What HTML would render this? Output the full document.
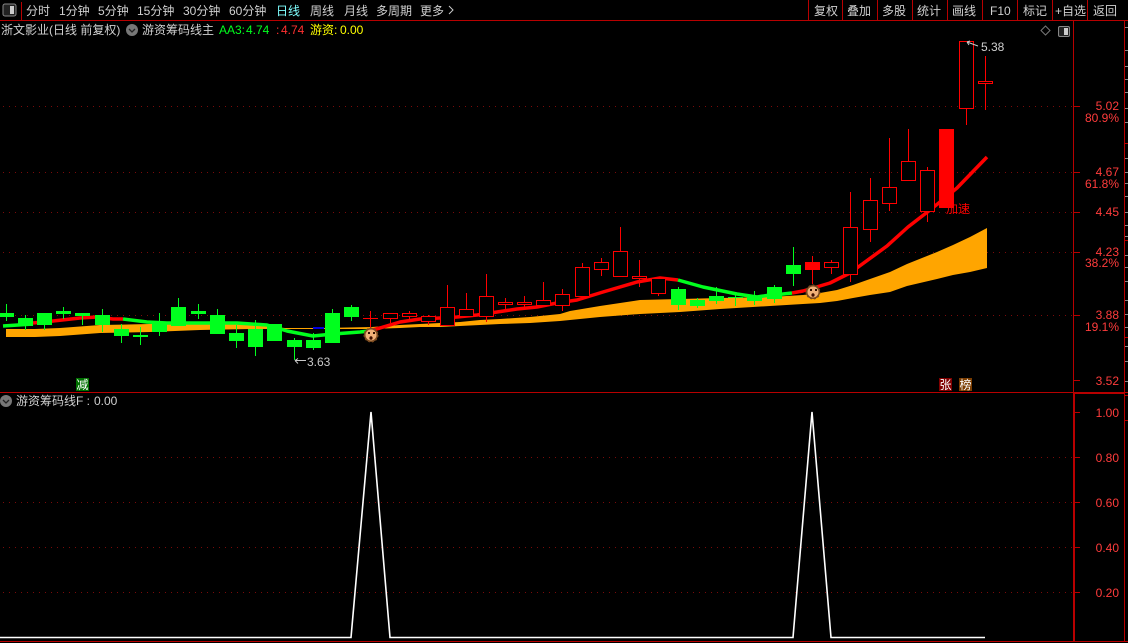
<!DOCTYPE html>
<html><head><meta charset="utf-8"><style>
html,body{margin:0;padding:0;background:#000;width:1128px;height:643px;overflow:hidden}
svg{display:block;font-family:"Liberation Sans","WenQuanYi Zen Hei","Noto Sans CJK SC",sans-serif;font-size:12px}
.c{shape-rendering:crispEdges}
.ax{fill:#ff3c3c;text-anchor:end}
.t{fill:#d0d0d0}
</style></head><body>
<svg width="1128" height="643" viewBox="0 0 1128 643" xmlns="http://www.w3.org/2000/svg">
<rect width="1128" height="643" fill="#000"/>
<!-- grid -->
<g stroke="#7a0a0a" stroke-dasharray="1 5" class="c">
<path d="M3 106.5H1073M3 172.5H1073M3 212.5H1073M3 252.5H1073M3 315.5H1073M3 457.5H1073M3 502.5H1073M3 547.5H1073M3 592.5H1073" fill="none"/>
</g>
<!-- frame -->
<g class="c" fill="none" stroke="#b80000">
<path d="M0 20.5H1128M0 392.5H1128M0 641.5H1128M1073.5 20V641M21.5 2V20M1124.5 20V641"/>
<path d="M808.5 0V20M842.5 0V20M877.5 0V20M912.5 0V20M947.5 0V20M982.5 0V20M1017.5 0V20M1052.5 0V20M1087.5 0V20"/>
<path d="M1074.5 393V641M1074 393.5H1124" stroke-width="1"/>
<path d="M1073 106.5H1080M1073 172.5H1080M1073 212.5H1080M1073 252.5H1080M1073 315.5H1080M1073 380.5H1080M1075 412.5H1080M1075 457.5H1080M1075 502.5H1080M1075 547.5H1080M1075 592.5H1080"/>
<path d="M1124 143.5H1128M1124 240.5H1128M1124 337.5H1128M1124 395.5H1128M1124 420.5H1128"/>
</g>
<path class="c" fill="none" stroke="#8a8a8a" d="M1125 27.5H1128M1125 50.5H1128M1125 66.5H1128M1125 79.5H1128M1125 92.5H1128M1125 108.5H1128M1125 122.5H1128M1125 158.5H1128M1125 172.5H1128M1125 183.5H1128M1125 196.5H1128M1125 212.5H1128M1125 225.5H1128M1125 236.5H1128M1125 255.5H1128M1125 267.5H1128M1125 281.5H1128M1125 300.5H1128M1125 314.5H1128M1125 327.5H1128M1125 346.5H1128M1125 361.5H1128M1125 381.5H1128"/>
<!-- orange band -->
<polygon fill="#ffa500" points="6,329 35,329 60,328 100,325 150,324 200,323 250,325 285,328 313,328 323,328 372,327 400,325 420,324 440,323 460,322 480,320 500,319 530,317 560,314 570,311 600,306 640,300 680,299 720,298 770,297 803,295 820,293 837,290 853,285 870,279 890,272 907,264 937,252 953,245 970,237 987,228 987,268 970,272 953,275 937,279 907,286 890,292 870,295 853,298 837,301 820,303 803,304 770,306 720,309 680,312 640,314 600,317 570,320 560,321 530,323 500,324 480,325 460,326 440,327 420,327 400,328 372,329 323,329 313,329 285,329 250,329 200,330 150,332 100,333 60,336 35,337 6,337"/>
<rect x="313" y="327" width="11" height="2" fill="#0000e0" class="c"/>
<!-- MA line -->
<g fill="none" stroke-width="3.5" stroke-linejoin="round">
<polyline stroke="#00ff1e" points="3,326 33,324"/>
<polyline stroke="#ff0000" points="33,323 53,321 80,318 97,317 113,319 123,319"/>
<polyline stroke="#00ff1e" points="123,319 147,322 167,323 200,323 237,323 267,325 287,331 313,336 333,334 360,332 369,331"/>
<polyline stroke="#ff0000" points="369,331 380,328 400,322 420,319 440,318 457,317 477,315 497,312 517,309 537,307 557,303 577,300 603,292 637,282 660,278 678,280"/>
<polyline stroke="#00ff1e" points="678,280 703,287 737,294 757,297 770,295 783,294 792,293"/>
<polyline stroke="#ff0000" points="792,293 803,291 830,283 850,273 887,246 908,227 930,210 940,202 957,188 987,157"/>
</g>
<!-- green candles -->
<g class="c" fill="none" stroke="#00ff1e">
<path d="M6.5 304V321M25.5 315V330M44.5 313V330M63.5 307V319M82.5 313V325M102.5 309V332M121.5 324V343M140.5 327V345M159.5 313V336M178.5 298V326M198.5 304V319M217.5 309V334M236.5 325V348M255.5 320V356M294.5 338V360M313.5 333V350M332.5 309V343M351.5 305V321M678.5 287V310M697.5 298V308M716.5 287V304M735.5 295V306M754.5 291V305M774.5 285V303M793.5 247V286"/>
</g>
<g class="c" fill="#00ff1e">
<rect x="0" y="313" width="14" height="4"/><rect x="18" y="318" width="15" height="8"/><rect x="37" y="313" width="15" height="12"/><rect x="56" y="311" width="15" height="3"/><rect x="75" y="313" width="15" height="3"/><rect x="95" y="315" width="15" height="10"/><rect x="114" y="329" width="15" height="7"/><rect x="133" y="335" width="15" height="2"/><rect x="152" y="322" width="15" height="10"/><rect x="171" y="307" width="15" height="19"/><rect x="191" y="311" width="15" height="3"/><rect x="210" y="315" width="15" height="19"/><rect x="229" y="333" width="15" height="8"/><rect x="248" y="329" width="15" height="18"/><rect x="267" y="324" width="15" height="17"/><rect x="287" y="340" width="15" height="7"/><rect x="306" y="340" width="15" height="8"/><rect x="325" y="313" width="15" height="30"/><rect x="344" y="307" width="15" height="10"/>
<rect x="671" y="289" width="15" height="16"/><rect x="690" y="300" width="15" height="6"/><rect x="709" y="296" width="15" height="5"/><rect x="728" y="297" width="15" height="1"/><rect x="747" y="296" width="15" height="5"/><rect x="767" y="287" width="15" height="12"/><rect x="786" y="265" width="15" height="9"/>
</g>
<!-- red candles -->
<g class="c" fill="none" stroke="#ff0000">
<path d="M370.5 311V328M363 318.5H378M390.5 319V323M409.5 311V320M428.5 315V325M447.5 285V326M466.5 293V317M486.5 274V322M505.5 298V309M524.5 296V310M543.5 282V306M562.5 289V311M582.5 263V297M601.5 258V276M620.5 227V277M639.5 260V287M658.5 278V296M812.5 256V284M831.5 260V274M850.5 192V282M870.5 178V242M889.5 138V211M908.5 129V181M927.5 167V222M966.5 109V125M985.5 56V110"/>
</g>
<g class="c" fill="#000" stroke="#ff0000">
<rect x="383.5" y="313.5" width="14" height="5"/><rect x="402.5" y="313.5" width="14" height="3"/><rect x="421.5" y="316.5" width="14" height="5"/><rect x="440.5" y="307.5" width="14" height="18"/><rect x="459.5" y="309.5" width="14" height="7"/><rect x="479.5" y="296.5" width="14" height="20"/><rect x="498.5" y="302.5" width="14" height="2"/><rect x="517.5" y="302.5" width="14" height="2"/><rect x="536.5" y="300.5" width="14" height="5"/><rect x="555.5" y="294.5" width="14" height="11"/><rect x="575.5" y="267.5" width="14" height="29"/><rect x="594.5" y="262.5" width="14" height="7"/><rect x="613.5" y="251.5" width="14" height="25"/><rect x="632.5" y="276.5" width="14" height="2"/><rect x="651.5" y="278.5" width="14" height="15"/>
<rect x="824.5" y="262.5" width="14" height="5"/><rect x="843.5" y="227.5" width="14" height="47"/><rect x="863.5" y="200.5" width="14" height="29"/><rect x="882.5" y="187.5" width="14" height="16"/><rect x="901.5" y="161.5" width="14" height="19"/><rect x="920.5" y="170.5" width="14" height="41"/><rect x="959.5" y="41.5" width="14" height="67"/><rect x="978.5" y="81.5" width="14" height="2"/>
</g>
<rect class="c" x="805" y="262" width="15" height="8" fill="#f00"/>
<rect class="c" x="939" y="129" width="15" height="79" fill="#f00"/>
<text x="946" y="213" fill="#ff0000">加速</text>
<!-- faces -->
<g>
<circle cx="371" cy="335" r="7" fill="#7a4a20" stroke="#7a4a20" stroke-width="1" stroke-dasharray="2 2"/>
<circle cx="371" cy="335" r="5.5" fill="#f0b078"/>
<rect x="368" y="332" width="2" height="2" fill="#301000"/><rect x="373" y="332" width="2" height="2" fill="#301000"/>
<ellipse cx="371" cy="338" rx="1.6" ry="1.8" fill="#401000"/>
</g>
<g>
<circle cx="813" cy="292" r="7" fill="#7a4a20" stroke="#7a4a20" stroke-width="1" stroke-dasharray="2 2"/>
<circle cx="813" cy="292" r="5.5" fill="#f0b078"/>
<rect x="810" y="289" width="2" height="2" fill="#301000"/><rect x="815" y="289" width="2" height="2" fill="#301000"/>
<ellipse cx="813" cy="295" rx="1.6" ry="1.8" fill="#401000"/>
</g>
<!-- annotations -->
<path fill="none" stroke="#c8c8c8" d="M295 360.5H306M295 360.5l3 -2M295 360.5l3 3M967 42l11 4M967 42l3 -1M967 42l2 3"/>
<text x="307" y="366" fill="#c8c8c8">3.63</text>
<text x="981" y="51" fill="#d0d0d0">5.38</text>
<!-- badges -->
<rect class="c" x="76" y="378" width="13" height="13" fill="#007000"/>
<text x="76.5" y="389" fill="#fff">减</text>
<rect class="c" x="939" y="378" width="13" height="13" fill="#800000"/>
<text x="939.5" y="389" fill="#fff">张</text>
<rect class="c" x="959" y="378" width="13" height="13" fill="#7a3c00"/>
<text x="959.5" y="389" fill="#fff">榜</text>
<!-- lower panel -->
<polyline fill="none" stroke="#fff" stroke-width="1.6" points="0,637.5 351,637.5 371,412 390,637.5 793,637.5 812,412 831,637.5 985,637.5"/>
<!-- axis labels -->
<g class="ax">
<text x="1119" y="110">5.02</text><text x="1119" y="122">80.9%</text>
<text x="1119" y="176">4.67</text><text x="1119" y="188">61.8%</text>
<text x="1119" y="216">4.45</text>
<text x="1119" y="256">4.23</text><text x="1119" y="267">38.2%</text>
<text x="1119" y="319">3.88</text><text x="1119" y="331">19.1%</text>
<text x="1119" y="385">3.52</text>
<text x="1119" y="417">1.00</text><text x="1119" y="462">0.80</text><text x="1119" y="507">0.60</text><text x="1119" y="552">0.40</text><text x="1119" y="597">0.20</text>
</g>
<!-- toolbar -->
<rect x="3" y="4" width="13" height="12" rx="2" fill="#222" stroke="#888"/>
<rect x="10" y="6" width="4" height="8" fill="#ccc"/>
<g class="t">
<text x="26" y="15">分时</text><text x="59" y="15">1分钟</text><text x="98" y="15">5分钟</text><text x="137" y="15">15分钟</text><text x="183" y="15">30分钟</text><text x="229" y="15">60分钟</text>
<text x="276" y="15" style="fill:#7fffff">日线</text>
<text x="310" y="15">周线</text><text x="344" y="15">月线</text><text x="376" y="15">多周期</text><text x="420" y="15">更多</text>
<path d="M449 6l4 4l-4 4" fill="none" stroke="#c8c8c8"/>
<text x="814" y="15">复权</text><text x="847" y="15">叠加</text><text x="882" y="15">多股</text><text x="917" y="15">统计</text><text x="952" y="15">画线</text><text x="990" y="15">F10</text><text x="1023" y="15">标记</text><text x="1055" y="15">+自选</text><text x="1093" y="15">返回</text>
</g>
<!-- header row -->
<text x="1" y="34" fill="#d0d0d0">浙文影业(日线 前复权)</text>
<circle cx="132" cy="30" r="6" fill="#777"/>
<path d="M129 29l3 3l3 -3" fill="none" stroke="#222" stroke-width="1.3"/>
<text x="142" y="34" fill="#d0d0d0">游资筹码线主</text>
<text x="219" y="34" fill="#00ff1e">AA3:</text><text x="246" y="34" fill="#00ff1e">4.74</text>
<text x="276" y="34" fill="#ff3030">:</text><text x="281" y="34" fill="#ff3030">4.74</text>
<text x="310" y="34" fill="#ffff00">游资:</text><text x="340" y="34" fill="#ffff00">0.00</text>
<path d="M1045.5 26l4.5 4.5l-4.5 4.5l-4.5 -4.5z" fill="none" stroke="#777"/>
<rect x="1058.5" y="26.5" width="11" height="10" rx="1.5" fill="#222" stroke="#888"/>
<rect x="1064" y="28" width="4" height="7" fill="#ccc"/>
<circle cx="6" cy="401" r="6" fill="#777"/>
<path d="M3 400l3 3l3 -3" fill="none" stroke="#222" stroke-width="1.3"/>
<text x="16" y="405" fill="#d0d0d0">游资筹码线F :</text><text x="94" y="405" fill="#d0d0d0">0.00</text>
</svg>
</body></html>
